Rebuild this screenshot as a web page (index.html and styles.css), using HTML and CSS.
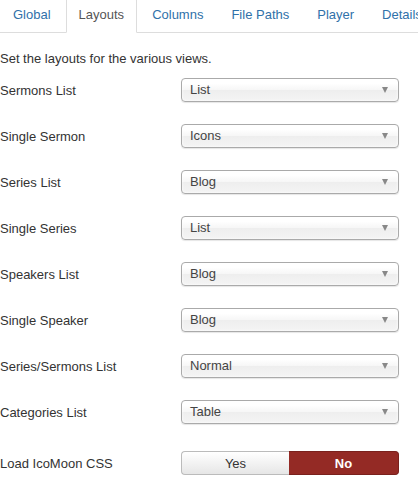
FILE: index.html
```html
<!DOCTYPE html>
<html>
<head>
<meta charset="utf-8">
<link rel="stylesheet" href="styles.css">
</head>
<body>
<ul class="tabs">
  <li class="tab"><span>Global</span></li>
  <li class="tab active"><span>Layouts</span></li>
  <li class="tab"><span>Columns</span></li>
  <li class="tab"><span>File Paths</span></li>
  <li class="tab"><span>Player</span></li>
  <li class="tab"><span>Details</span></li>
</ul>
<p class="desc">Set the layouts for the various views.</p>
<div class="form">
  <div class="row"><label class="lbl">Sermons List</label><div class="select"><span>List</span><i class="arrow"></i></div></div>
  <div class="row"><label class="lbl">Single Sermon</label><div class="select"><span>Icons</span><i class="arrow"></i></div></div>
  <div class="row"><label class="lbl">Series List</label><div class="select"><span>Blog</span><i class="arrow"></i></div></div>
  <div class="row"><label class="lbl">Single Series</label><div class="select"><span>List</span><i class="arrow"></i></div></div>
  <div class="row"><label class="lbl">Speakers List</label><div class="select"><span>Blog</span><i class="arrow"></i></div></div>
  <div class="row"><label class="lbl">Single Speaker</label><div class="select"><span>Blog</span><i class="arrow"></i></div></div>
  <div class="row"><label class="lbl">Series/Sermons List</label><div class="select"><span>Normal</span><i class="arrow"></i></div></div>
  <div class="row"><label class="lbl">Categories List</label><div class="select"><span>Table</span><i class="arrow"></i></div></div>
  <div class="row toggle-row"><label class="lbl">Load IcoMoon CSS</label>
    <div class="toggle"><span class="opt yes">Yes</span><span class="opt no">No</span></div>
  </div>
</div>
</body>
</html>
```
FILE: styles.css
```css
html, body {
  margin: 0;
  padding: 0;
  background: #fff;
  font-family: "Liberation Sans", Arial, sans-serif;
  font-size: 13px;
  color: #333;
  width: 418px;
  overflow: hidden;
}
.tabs {
  list-style: none;
  margin: -3px 0 0 0;
  padding: 0;
  display: flex;
  border-bottom: 1px solid #ddd;
  white-space: nowrap;
}
.tab {
  margin: 0 2px -1px 0;
  padding: 8px 12px;
  line-height: 18px;
  border: 1px solid transparent;
  color: #3071a9;
  flex: none;
}
.tab.active {
  color: #555;
  border-color: #ddd;
  border-bottom-color: #fff;
  border-radius: 4px 4px 0 0;
  background: #fff;
}
.desc {
  margin: 17px 0 10px 0;
  line-height: 18px;
}
.form {
  display: flex;
  flex-direction: column;
  gap: 22px;
}
.row {
  display: flex;
  align-items: center;
  height: 24px;
}
.lbl {
  width: 181px;
  flex: none;
  line-height: 18px;
  position: relative;
  top: 1px;
}
.select {
  width: 218px;
  height: 24px;
  box-sizing: border-box;
  border: 1px solid #aaa;
  border-radius: 4px;
  background: linear-gradient(#fff 20%, #f6f6f6 50%, #eee 52%, #f4f4f4 100%);
  box-shadow: 0 0 3px #fff inset, 0 1px 1px rgba(0,0,0,0.1);
  display: flex;
  align-items: center;
  justify-content: space-between;
  padding: 0 10px 0 8px;
  color: #444;
  line-height: 22px;
}
.arrow {
  width: 0;
  height: 0;
  border-left: 3.5px solid transparent;
  border-right: 3.5px solid transparent;
  border-top: 6px solid #888;
}
.toggle-row {
  margin-top: 5px;
}
.toggle {
  display: flex;
  width: 218px;
  height: 24px;
}
.opt {
  flex: 1;
  display: flex;
  align-items: center;
  justify-content: center;
  box-sizing: border-box;
}
.yes {
  width: 108px;
  flex: none;
  border: 1px solid #bbb;
  border-right: 0;
  border-radius: 4px 0 0 4px;
  background: linear-gradient(#fff, #e6e6e6);
  color: #333;
}
.no {
  border: 1px solid #7a211d;
  border-left: 0;
  border-radius: 0 4px 4px 0;
  background: #942a25;
  color: #fff;
  font-weight: bold;
}
```
